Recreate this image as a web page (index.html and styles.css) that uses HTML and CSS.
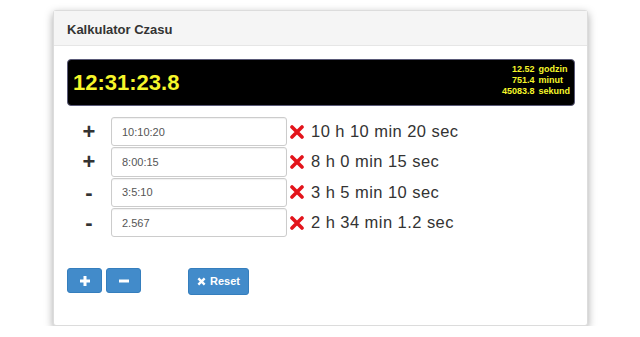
FILE: index.html
```html
<!DOCTYPE html>
<html lang="pl">
<head>
<meta charset="utf-8">
<title>Kalkulator Czasu</title>
<link rel="stylesheet" href="styles.css">
</head>
<body>
<div class="panel">
  <div class="panel-heading">Kalkulator Czasu</div>
  <div class="panel-body">
    <div class="display">
      <div class="total">12:31:23.8</div>
      <table class="units">
        <tr><td class="num">12.52</td><td class="unit">godzin</td></tr>
        <tr><td class="num">751.4</td><td class="unit">minut</td></tr>
        <tr><td class="num">45083.8</td><td class="unit">sekund</td></tr>
      </table>
    </div>
    <div class="rows">
      <div class="row">
        <span class="sign">+</span>
        <input class="field" type="text" value="10:10:20">
        <svg class="del" viewBox="0 0 14 14" width="14" height="14"><path d="M2 2 L12 12 M12 2 L2 12"/></svg>
        <span class="desc">10 h 10 min 20 sec</span>
      </div>
      <div class="row">
        <span class="sign">+</span>
        <input class="field" type="text" value="8:00:15">
        <svg class="del" viewBox="0 0 14 14" width="14" height="14"><path d="M2 2 L12 12 M12 2 L2 12"/></svg>
        <span class="desc">8 h 0 min 15 sec</span>
      </div>
      <div class="row">
        <span class="sign">-</span>
        <input class="field" type="text" value="3:5:10">
        <svg class="del" viewBox="0 0 14 14" width="14" height="14"><path d="M2 2 L12 12 M12 2 L2 12"/></svg>
        <span class="desc">3 h 5 min 10 sec</span>
      </div>
      <div class="row">
        <span class="sign">-</span>
        <input class="field" type="text" value="2.567">
        <svg class="del" viewBox="0 0 14 14" width="14" height="14"><path d="M2 2 L12 12 M12 2 L2 12"/></svg>
        <span class="desc">2 h 34 min 1.2 sec</span>
      </div>
    </div>
    <div class="actions">
      <button class="btn btn-icon" type="button"><svg viewBox="0 0 12 12" width="12" height="12"><path d="M6 1 V11 M1 6 H11"/></svg></button>
      <button class="btn btn-icon" type="button"><svg viewBox="0 0 12 12" width="12" height="12"><path d="M1 6 H11"/></svg></button>
      <button class="btn btn-reset" type="button"><svg viewBox="0 0 10 10" width="9" height="9"><path d="M1.5 1.5 L8.5 8.5 M8.5 1.5 L1.5 8.5"/></svg>Reset</button>
    </div>
  </div>
</div>
</body>
</html>
```
FILE: styles.css
```css
html, body {
  margin: 0;
  padding: 0;
  background: #fff;
}
body {
  font-family: "Liberation Sans", Arial, sans-serif;
  color: #333;
  padding-top: 10px;
}
.panel {
  margin-left: 53px;
  width: 535px;
  height: 316px;
  box-sizing: border-box;
  background: #fff;
  border: 1px solid #dcdcdc;
  border-radius: 3px;
  box-shadow: 0 3px 8px rgba(0, 0, 0, 0.35);
}
.panel-heading {
  height: 35px;
  box-sizing: border-box;
  padding: 11px 0 0 13px;
  background: #f5f5f5;
  border-bottom: 1px solid #e6e6e6;
  font-size: 13px;
  font-weight: bold;
  color: #333;
}
.panel-body {
  padding: 13px 12px 0 13px;
}
.display {
  height: 47px;
  box-sizing: border-box;
  background: #000;
  border: 1px solid #5a5a78;
  border-radius: 4px;
  display: flex;
  justify-content: space-between;
  align-items: flex-start;
  padding: 0 4px 0 5px;
}
.total {
  color: #f6f62a;
  font-size: 22px;
  font-weight: bold;
  line-height: 22px;
  margin-top: 12px;
}
.units {
  border-collapse: collapse;
  margin-top: 4px;
  color: #f6f62a;
  font-size: 9px;
  font-weight: bold;
  line-height: 10.8px;
}
.units td {
  padding: 0;
}
.units .num {
  text-align: right;
  padding-right: 4px;
}
.units .unit {
  text-align: left;
}
.rows {
  margin-top: 11px;
  display: flex;
  flex-direction: column;
  gap: 1px;
}
.row {
  display: flex;
  align-items: center;
  height: 29.3px;
}
.sign {
  width: 44px;
  text-align: center;
  font-size: 22px;
  font-weight: bold;
  color: #333;
  line-height: 29px;
}
.field {
  width: 176px;
  height: 29.3px;
  box-sizing: border-box;
  border: 1px solid #ccc;
  border-radius: 3px;
  padding: 0 0 0 10px;
  margin: 0;
  font-family: "Liberation Sans", Arial, sans-serif;
  font-size: 11px;
  color: #555;
  background: #fff;
  box-shadow: inset 0 1px 1px rgba(0, 0, 0, 0.06);
}
.del {
  margin-left: 3px;
  fill: none;
  stroke: #e3141b;
  stroke-width: 3.6;
  stroke-linecap: round;
}
.desc {
  margin-left: 7px;
  font-size: 16.5px;
  letter-spacing: 0.45px;
  color: #333;
}
.actions {
  margin-top: 31px;
  display: flex;
  align-items: flex-start;
}
.btn {
  margin: 0;
  padding: 0;
  background: #428bca;
  border: 1px solid #357ebd;
  border-radius: 3px;
  color: #fff;
  display: flex;
  align-items: center;
  justify-content: center;
  box-sizing: border-box;
}
.btn svg {
  fill: none;
  stroke: #fff;
  stroke-width: 3;
}
.btn-icon {
  width: 35px;
  height: 25px;
  margin-right: 4px;
}
.btn-reset {
  margin-left: 43px;
  width: 61px;
  height: 27px;
  font-family: "Liberation Sans", Arial, sans-serif;
  font-size: 11px;
  font-weight: bold;
  gap: 4px;
  padding-bottom: 1px;
}
.btn-reset svg {
  stroke-width: 2.6;
}
```
